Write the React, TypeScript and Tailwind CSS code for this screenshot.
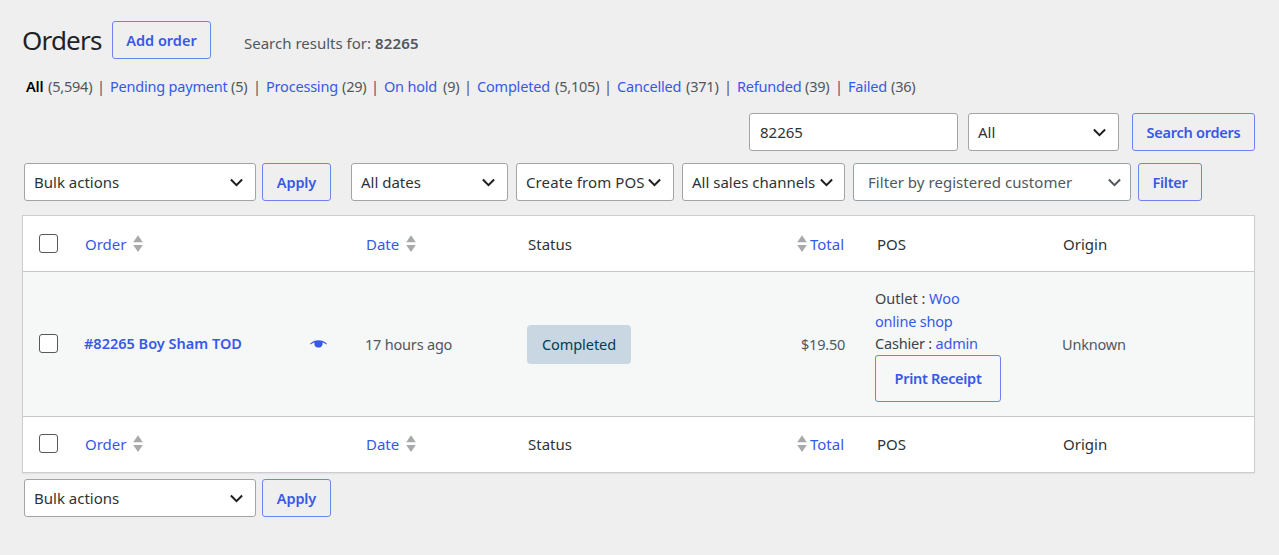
import type { ReactNode } from "react";

const statuses = [
  { label: "All", count: "(5,594)", lw: "w-[22px]", cw: "w-[49px]" },
  { label: "Pending payment", count: "(5)", lw: "w-[121px]", cw: "w-[22px]" },
  { label: "Processing", count: "(29)", lw: "w-[76px]", cw: "w-[29px]" },
  { label: "On hold", count: "(9)", lw: "w-[59px]", cw: "w-[21px]" },
  { label: "Completed", count: "(5,105)", lw: "w-[78px]", cw: "w-[49px]" },
  { label: "Cancelled", count: "(371)", lw: "w-[69px]", cw: "w-[38px]" },
  { label: "Refunded", count: "(39)", lw: "w-[68px]", cw: "w-[30px]" },
  { label: "Failed", count: "(36)", lw: "w-[43px]", cw: "w-[30px]" },
];

function Chevron({ className = "text-[#1e1e1e]" }: { className?: string }) {
  return (
    <svg className={`h-[9px] w-[13px] shrink-0 ${className}`} viewBox="0 0 13 9" fill="none" stroke="currentColor" strokeWidth="2">
      <path d="M.9 1.500 6.500 7.100l5.600-5.600" />
    </svg>
  );
}

function Select({ children, className }: { children: ReactNode; className: string }) {
  return (
    <div className={`flex h-[38px] shrink-0 items-center justify-between rounded-[3px] border border-[#a2a4a6] bg-white pl-[9px] text-[#2c3338] ${className}`}>
      <span>{children}</span>
      <Chevron />
    </div>
  );
}

function Button({ children, className }: { children: ReactNode; className: string }) {
  return (
    <button className={`flex shrink-0 items-center justify-center rounded-[3px] border border-[#6d84ee] text-[14.5px] font-semibold text-[#3858e9] ${className}`}>
      {children}
    </button>
  );
}

function Checkbox() {
  return <span className="block size-[19px] rounded-[3px] border border-[#55585c] bg-white" />;
}

function Sort() {
  return (
    <svg className="h-[17px] w-[10px] shrink-0 text-[#a7aaad]" viewBox="0 0 10 17" fill="currentColor">
      <path d="M5 .3l4.800 6.900H.2zM5 17l4.800-6.900H.2z" />
    </svg>
  );
}

const columns = "grid grid-cols-[61px_281px_163px_211px_138px_186px_1fr] items-center";

function HeaderRow({ className }: { className: string }) {
  return (
    <div className={`${columns} bg-white text-[#2c3338] ${className}`}>
      <div className="pb-px pl-4"><Checkbox /></div>
      <div className="flex items-center gap-[6px] pl-[1px] text-[#3858e9]">
        <span className="w-[42px]">Order</span>
        <span className="pb-[1px]"><Sort /></span>
      </div>
      <div className="flex items-center gap-[6px] pl-[1px] text-[#3858e9]">
        <span className="w-[34px]">Date</span>
        <span className="pb-[1px]"><Sort /></span>
      </div>
      <div>Status</div>
      <div className="flex items-center gap-[3px] pl-[58px] text-[#3858e9]">
        <span className="pb-[1px]"><Sort /></span>
        <span>Total</span>
      </div>
      <div>POS</div>
      <div>Origin</div>
    </div>
  );
}

function BulkActions() {
  return (
    <>
      <Select className="w-[232px] pr-3">Bulk actions</Select>
      <Button className="ml-[6px] h-[38px] w-[69px] tracking-[-0.1px]">Apply</Button>
    </>
  );
}

export default function App() {
  return (
    <main className="h-[555px] w-[1279px] overflow-hidden whitespace-nowrap bg-[#efefef] pl-[23px] pt-[21px] font-['Noto_Sans',sans-serif] text-[15px] leading-[22px] text-[#50575e]">
      <header className="flex h-[38px] items-center">
        <h1 className="-ml-px w-[90px] pb-px text-[26px] leading-[38px] tracking-[-0.8px] text-[#1d2327]">Orders</h1>
        <Button className="h-[38px] w-[99px]">Add order</Button>
        <p className="ml-[33px] pt-[5px]">
          Search results for: <strong className="font-semibold tracking-[0.2px]">82265</strong>
        </p>
      </header>

      <nav className="mt-4 flex h-[22px] pl-[3px] text-[14.5px] tracking-[-0.2px]">
        {statuses.map((s, i) => (
          <div key={s.label} className="flex">
            <span className={`${s.lw} ${i === 0 ? "font-semibold text-black" : "text-[#3858e9]"}`}>{s.label}</span>
            <span className={s.cw}>{s.count}</span>
            {i < statuses.length - 1 && <span className="w-[13px]">|</span>}
          </div>
        ))}
      </nav>

      <div className="mt-4 flex justify-end pr-6">
        <div className="flex h-[38px] w-[209px] items-center rounded-[3px] border border-[#a2a4a6] bg-white pl-[10px] text-[#2c3338]">82265</div>
        <Select className="ml-[10px] w-[151px] pr-3">All</Select>
        <Button className="ml-[13px] h-[38px] w-[123px] tracking-[-0.25px]">Search orders</Button>
      </div>

      <div className="mt-3 flex pl-[1px]">
        <BulkActions />
        <Select className="ml-5 w-[157px] pr-3">All dates</Select>
        <Select className="ml-2 w-[158px] pr-3 tracking-[0.1px]">Create from POS</Select>
        <Select className="ml-2 w-[163px] pr-[11px]">All sales channels</Select>
        <div className="ml-2 flex h-[38px] w-[278px] items-center justify-between rounded-[3px] border border-[#97a1aa] bg-white pl-[14px] pr-[9px]">
          <span className="tracking-[0.05px]">Filter by registered customer</span>
          <Chevron className="text-[#50575e]" />
        </div>
        <Button className="ml-[7px] h-[38px] w-[64px] tracking-[-0.3px]">Filter</Button>
      </div>

      <section className="-ml-px mt-[14px] h-[258px] w-[1233px] border border-[#cbcdcf] shadow-[0_1px_1px_rgba(0,0,0,0.05)]">
        <HeaderRow className="h-[55px]" />
        <div className={`${columns} h-[146px] border-y border-[#c6c9cb] bg-[#f6f7f7] text-[14.5px] tracking-[-0.2px]`}>
          <div className="pb-[2px] pl-4"><Checkbox /></div>
          <div className="flex items-center pb-[2px] font-semibold tracking-normal text-[#3858e9]">
            <span className="w-[226px]">#82265 Boy Sham TOD</span>
            <svg className="h-[9px] w-[17px]" viewBox="0 0 17 9" fill="currentColor">
              <path d="M0 4.700C4.800.2 12.200.2 17 4.700l-.6.7c-1.300-1-2.600-1.700-4-2.200.9 2.900-.9 5.300-3.900 5.300s-4.800-2.400-3.900-5.300C3.200 3.700 1.900 4.400.6 5.400z" />
            </svg>
          </div>
          <div>17 hours ago</div>
          <div>
            <span className="-ml-[1px] flex h-[39px] w-[104px] items-center justify-center rounded-[4px] bg-[#c8d7e1] tracking-[-0.05px] text-[#003d56]">Completed</span>
          </div>
          <div className="pl-[62px]">$19.50</div>
          <div className="-ml-[2px] pt-px leading-[22.4px] text-[#3c434a]">
            <div className="tracking-normal">Outlet : <a className="text-[#3858e9]">Woo</a></div>
            <div className="text-[#3858e9]">online shop</div>
            <div>Cashier : <a className="text-[#3858e9]">admin</a></div>
            <Button className="h-[47px] w-[126px] tracking-[-0.3px]">Print Receipt</Button>
          </div>
          <div className="-ml-[1px]">Unknown</div>
        </div>
        <HeaderRow className="h-[54px]" />
        <div className="h-px bg-white" />
      </section>

      <div className="mt-[6px] flex pl-[1px]">
        <BulkActions />
      </div>
    </main>
  );
}
